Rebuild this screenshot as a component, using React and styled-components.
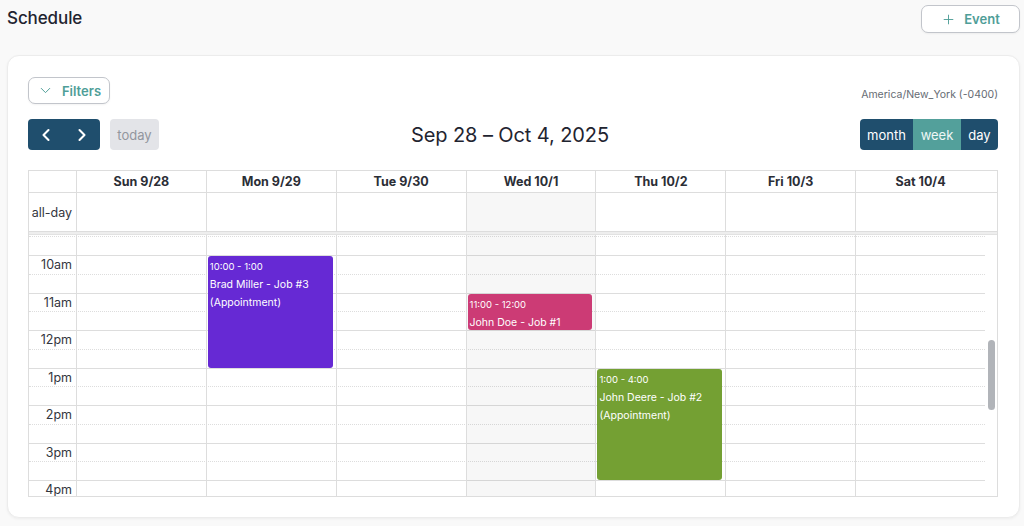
import React from 'react';
import styled, { createGlobalStyle, css } from 'styled-components';
import { ChevronLeft, ChevronRight, ChevronDown, Plus } from 'lucide-react';

const FONT = `Inter, "Liberation Sans", "DejaVu Sans", sans-serif`;
const SLOT = 18.75;
const BORDER = '#dddddd';
const FIRST_SLOT = 19; // 9:30, the first half-hour row scrolled into view
const LAST_SLOT = 33; // 4:30

const GlobalStyle = createGlobalStyle`
  *, *::before, *::after { box-sizing: border-box; }
  html, body { margin: 0; padding: 0; background: #f9f9f9; }
  body { font-family: ${FONT}; color: #1f2430; }
  button { font-family: ${FONT}; cursor: pointer; }
`;

const Page = styled.div`
  width: 1024px;
  height: 526px;
  padding: 5px 4px 8px 7px;
  display: flex;
  flex-direction: column;
`;

const TopBar = styled.header`
  display: flex;
  align-items: center;
  justify-content: space-between;
  height: 28px;
  margin-bottom: 22px;
`;

const PageTitle = styled.h1`
  margin: 0 0 2px;
  font-size: 17px;
  font-weight: 500;
  color: #1f2430;
  letter-spacing: -0.1px;
`;

const OutlineButton = styled.button`
  display: inline-flex;
  align-items: center;
  justify-content: center;
  gap: ${(p) => p.$gap}px;
  width: ${(p) => p.$w}px;
  height: ${(p) => p.$h}px;
  padding: 0;
  background: #fff;
  border: 1px solid #c2c5cb;
  border-radius: 7px;
  box-shadow: 0 1px 2px rgba(0, 0, 0, 0.05);
  color: #4f9e98;
  font-size: 13px;
  font-weight: 600;
`;

const Card = styled.section`
  flex: 1;
  display: flex;
  flex-direction: column;
  background: #fff;
  border: 1px solid #ececec;
  border-radius: 12px;
  box-shadow: 0 1px 3px rgba(0, 0, 0, 0.05);
  padding: 21px 21px 20px 20px;
`;

const FilterRow = styled.div`
  display: flex;
  align-items: flex-end;
  justify-content: space-between;
  height: 27px;
  margin-bottom: 15px;
`;

const Timezone = styled.span`
  font-size: 10.5px;
  line-height: 14px;
  color: #666b73;
  margin-bottom: 2px;
`;

const Toolbar = styled.div`
  display: grid;
  grid-template-columns: 1fr auto 1fr;
  align-items: center;
  height: 31px;
  margin-bottom: 20px;
`;

const ToolbarLeft = styled.div`
  display: flex;
  align-items: center;
  gap: 10px;
`;

const ToolbarRight = styled.div`
  display: flex;
  justify-content: flex-end;
`;

const RangeTitle = styled.h2`
  margin: 0 6px 0 0;
  font-size: 20px;
  font-weight: 400;
  color: #1f2430;
  letter-spacing: -0.1px;
`;

const ButtonGroup = styled.div`
  display: flex;
  height: 31px;
  border-radius: 4px;
  overflow: hidden;
`;

const NavButton = styled.button`
  display: flex;
  align-items: center;
  justify-content: center;
  width: 36px;
  height: 31px;
  padding: 0;
  border: none;
  background: #1f4e6d;
  color: #fff;
`;

const TodayButton = styled.button`
  width: 49px;
  height: 31px;
  padding: 0;
  border: none;
  border-radius: 4px;
  background: #e3e4e8;
  color: #92969e;
  font-size: 13px;
`;

const ViewButton = styled.button`
  width: ${(p) => p.$w}px;
  height: 31px;
  padding: 0;
  border: none;
  background: ${(p) => (p.$active ? '#53a09b' : '#1f4e6d')};
  color: ${(p) => (p.$active ? '#eef7f6' : '#fff')};
  font-size: 13px;
`;

const Calendar = styled.div`
  border: 1px solid ${BORDER};
  display: flex;
  flex-direction: column;
  height: 327px;
`;

const gridCols = css`
  display: grid;
  grid-template-columns: 47px repeat(7, 1fr) 12px;
`;

const HeaderRow = styled.div`
  ${gridCols};
  height: 22px;
  border-bottom: 1px solid ${BORDER};
`;

const HeaderCell = styled.div`
  display: flex;
  align-items: center;
  justify-content: center;
  border-left: 1px solid ${BORDER};
  font-size: 12.5px;
  font-weight: 700;
  color: #2b2e36;
`;

const AllDayRow = styled.div`
  ${gridCols};
  height: 39px;
  border-bottom: 1px solid ${BORDER};
`;

const AxisLabel = styled.div`
  display: flex;
  align-items: center;
  justify-content: flex-end;
  padding-right: 4px;
  font-size: 12.5px;
  color: #33363d;
  white-space: nowrap;
`;

const AllDayCell = styled.div`
  border-left: 1px solid ${BORDER};
  background: ${(p) => (p.$today ? '#f7f7f7' : 'transparent')};
`;

const Divider = styled.div`
  height: 3px;
  background: #eeeeee;
  border-bottom: 1px solid #e2e2e2;
`;

const Body = styled.div`
  display: flex;
  height: 261px;
`;

const Viewport = styled.div`
  flex: 1;
  overflow: hidden;
`;

const TimeGrid = styled.div`
  position: relative;
  padding-top: 1.25px;
`;

const SlotRow = styled.div`
  display: grid;
  grid-template-columns: 47px 1fr;
  height: ${SLOT}px;
  border-top: 1px ${(p) => (p.$hour ? 'solid' : 'dotted')} ${BORDER};
`;

const SlotLabel = styled.div`
  display: flex;
  align-items: center;
  justify-content: flex-end;
  padding-right: 4px;
  font-size: 12.5px;
  color: #33363d;
  white-space: nowrap;
`;

const ColumnsLayer = styled.div`
  position: absolute;
  top: 0;
  bottom: 0;
  left: 47px;
  right: 0;
  display: grid;
  grid-template-columns: repeat(7, 1fr);
`;

const DayColumn = styled.div`
  position: relative;
  border-left: 1px solid ${BORDER};
  background: ${(p) => (p.$today ? 'rgba(0,0,0,0.03)' : 'transparent')};
`;

const EventBox = styled.div`
  position: absolute;
  left: 1px;
  right: 3px;
  border-radius: 3px;
  background: ${(p) => p.$color};
  color: #fff;
  padding: 3px 2px 0;
  overflow: hidden;
`;

const EventTime = styled.div`
  font-size: 9.5px;
  line-height: 15px;
`;

const EventTitle = styled.div`
  margin-top: ${(p) => (p.$sub ? 0 : 2)}px;
  font-size: 10.5px;
  line-height: 18px;
  white-space: nowrap;
`;

const ScrollTrack = styled.div`
  width: 12px;
  padding-left: 3px;
`;

const ScrollThumb = styled.div`
  width: 7px;
  height: 70px;
  margin-top: 105px;
  border-radius: 4px;
  background: #b1b4b9;
`;

const DAYS = ['Sun 9/28', 'Mon 9/29', 'Tue 9/30', 'Wed 10/1', 'Thu 10/2', 'Fri 10/3', 'Sat 10/4'];
const TODAY = 3;

const EVENTS = [
  { day: 1, start: 10, end: 13, time: '10:00 - 1:00', title: 'Brad Miller - Job #3', sub: '(Appointment)', color: '#6629d4' },
  { day: 3, start: 11, end: 12, time: '11:00 - 12:00', title: 'John Doe - Job #1', color: '#cc3b75' },
  { day: 4, start: 13, end: 16, time: '1:00 - 4:00', title: 'John Deere - Job #2', sub: '(Appointment)', color: '#74a033' },
];

const hourLabel = (h) => {
  const suffix = h < 12 ? 'am' : 'pm';
  const n = h % 12 === 0 ? 12 : h % 12;
  return `${n}${suffix}`;
};

const SLOTS = Array.from({ length: LAST_SLOT - FIRST_SLOT + 1 }, (_, i) => FIRST_SLOT + i);
const slotTop = (hour) => (hour * 2 - FIRST_SLOT) * SLOT + 1.25;

export default function App() {
  return (
    <>
      <GlobalStyle />
      <Page>
        <TopBar>
          <PageTitle>Schedule</PageTitle>
          <OutlineButton $w={99} $h={28} $gap={8}>
            <Plus size={15} strokeWidth={1.5} />
            Event
          </OutlineButton>
        </TopBar>

        <Card>
          <FilterRow>
            <OutlineButton $w={82} $h={27} $gap={8}>
              <ChevronDown size={17} strokeWidth={1.4} />
              Filters
            </OutlineButton>
            <Timezone>America/New_York (-0400)</Timezone>
          </FilterRow>

          <Toolbar>
            <ToolbarLeft>
              <ButtonGroup>
                <NavButton aria-label="prev">
                  <ChevronLeft size={20} strokeWidth={2.5} />
                </NavButton>
                <NavButton aria-label="next">
                  <ChevronRight size={20} strokeWidth={2.5} />
                </NavButton>
              </ButtonGroup>
              <TodayButton>today</TodayButton>
            </ToolbarLeft>
            <RangeTitle>Sep 28 – Oct 4, 2025</RangeTitle>
            <ToolbarRight>
              <ButtonGroup>
                <ViewButton $w={53}>month</ViewButton>
                <ViewButton $w={48} $active>week</ViewButton>
                <ViewButton $w={37}>day</ViewButton>
              </ButtonGroup>
            </ToolbarRight>
          </Toolbar>

          <Calendar>
            <HeaderRow>
              <div />
              {DAYS.map((d) => (
                <HeaderCell key={d}>{d}</HeaderCell>
              ))}
              <div />
            </HeaderRow>

            <AllDayRow>
              <AxisLabel>all-day</AxisLabel>
              {DAYS.map((d, i) => (
                <AllDayCell key={d} $today={i === TODAY} />
              ))}
              <div />
            </AllDayRow>

            <Divider />

            <Body>
              <Viewport>
                <TimeGrid>
                  {SLOTS.map((s) => (
                    <SlotRow key={s} $hour={s % 2 === 0}>
                      <SlotLabel>{s % 2 === 0 ? hourLabel(s / 2) : ''}</SlotLabel>
                      <div />
                    </SlotRow>
                  ))}
                  <ColumnsLayer>
                    {DAYS.map((d, i) => (
                      <DayColumn key={d} $today={i === TODAY}>
                        {EVENTS.filter((e) => e.day === i).map((e) => (
                          <EventBox
                            key={e.title}
                            $color={e.color}
                            style={{
                              top: slotTop(e.start) + 1,
                              height: (e.end - e.start) * 2 * SLOT - 1,
                            }}
                          >
                            <EventTime>{e.time}</EventTime>
                            <EventTitle>{e.title}</EventTitle>
                            {e.sub && <EventTitle $sub>{e.sub}</EventTitle>}
                          </EventBox>
                        ))}
                      </DayColumn>
                    ))}
                  </ColumnsLayer>
                </TimeGrid>
              </Viewport>
              <ScrollTrack>
                <ScrollThumb />
              </ScrollTrack>
            </Body>
          </Calendar>
        </Card>
      </Page>
    </>
  );
}
